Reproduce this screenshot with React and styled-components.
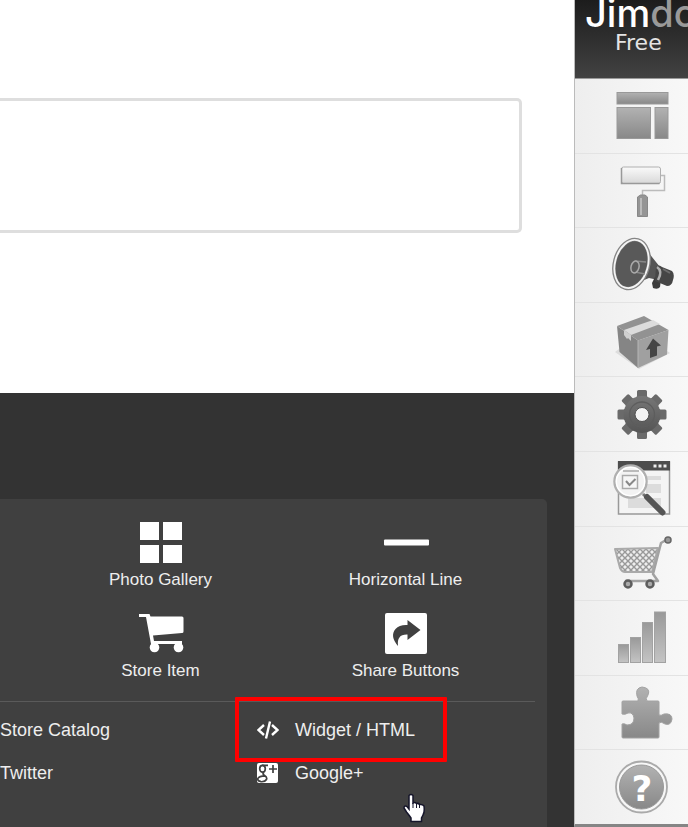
import React from 'react'
import styled, { createGlobalStyle } from 'styled-components'

const GlobalStyle = createGlobalStyle`
    * {
        box-sizing: border-box;
    }
    body {
        margin: 0;
        background: #fff;
        font-family: "Liberation Sans", Arial, sans-serif;
    }
    button {
        font: inherit;
        color: inherit;
        border: 0;
        padding: 0;
        background: none;
        cursor: pointer;
    }
`
const Page = styled.div`
    display: flex;
    min-height: 100vh;
    overflow: hidden;
`
const Main = styled.main`
    flex: 1;
    min-width: 0;
    display: flex;
    flex-direction: column;
`
const Content = styled.section`
    padding: 98px 52px 160px 0;
`
const ContentBox = styled.div`
    height: 135px;
    border: 3px solid #dedede;
    border-left: 0;
    border-radius: 0 5px 5px 0;
`
const Dock = styled.section`
    flex: 1;
    display: flex;
    padding: 106px 27px 0 0;
    background: #333;
`
const Panel = styled.div`
    position: relative;
    flex: 1;
    background: #404040;
    border-radius: 0 5px 0 0;
    color: #eee;
    text-shadow: 0 0 1px #ccc;
`
const Tiles = styled.div`
    display: grid;
    grid-template-columns: 1fr 1fr;
    row-gap: 20px;
    padding: 20px 19px 20px 38px;
`
const Tile = styled.button`
    display: flex;
    flex-direction: column;
    align-items: center;
    gap: 3px;
    font-size: 17px;
    line-height: 20px;
    svg {
        display: block;
        width: 48px;
        height: 48px;
    }
`
const Divider = styled.hr`
    margin: 0 12px 0 0;
    border: 0;
    border-top: 1px solid #5a5a5a;
`
const Links = styled.div`
    display: grid;
    grid-template-columns: 1fr 1fr;
    padding: 6px 33px 0 0;
`
const Cell = styled.div`
    position: relative;
`
const ItemButton = styled.button`
    display: flex;
    align-items: center;
    gap: 16px;
    height: 43px;
    font-size: 18px;
    line-height: 20px;
    svg {
        display: block;
        width: 22px;
        height: 22px;
    }
`
const Highlight = styled.div`
    position: absolute;
    top: -11px;
    left: -22px;
    width: 212px;
    height: 65px;
    border: 4px solid #f00;
    border-radius: 1px;
    pointer-events: none;
`
const Pointer = styled.svg`
    position: absolute;
    left: 402px;
    bottom: 4px;
    width: 24px;
    height: 30px;
`
const Sidebar = styled.aside`
    flex: 0 0 114px;
    display: flex;
    flex-direction: column;
    overflow: hidden;
    border-left: 1px solid #bbb;
    border-bottom: 3px solid #858585;
    background: linear-gradient(90deg, #eee, #f8f8f8);
`
const Brand = styled.header`
    height: 79px;
    overflow: hidden;
    padding-left: 10px;
    border-bottom: 1px solid #999;
    background: linear-gradient(#1c1c1c, #424242);
    font-family: Inter, sans-serif;
    color: #fff;
    white-space: nowrap;
`
const Logo = styled.div`
    height: 32px;
    font-size: 38px;
    font-weight: 500;
    line-height: 26px;
    span {
        color: #999;
    }
`
const Plan = styled.div`
    padding-left: 30px;
    font-family: "DejaVu Sans", sans-serif;
    font-size: 22px;
    line-height: 22px;
    color: #e4e4e4;
`
const Nav = styled.nav`
    flex: 1;
    display: flex;
    flex-direction: column;
`
const NavButton = styled.button`
    flex: 1;
    display: flex;
    align-items: center;
    padding-left: 35px;
    & + & {
        border-top: 1px solid #e3e3e3;
    }
    svg {
        display: block;
        flex: none;
        width: 64px;
        height: 64px;
    }
`

function Defs() {
    return (
        <svg width="0" height="0" style={{ display: 'block', position: 'absolute' }} aria-hidden="true">
            <defs>
                <linearGradient id="gray" x1="0" y1="0" x2="0" y2="1">
                    <stop offset="0" stopColor="#b2b2b2" />
                    <stop offset="1" stopColor="#888" />
                </linearGradient>
                <linearGradient id="light" x1="0" y1="0" x2="0" y2="1">
                    <stop offset="0" stopColor="#fafafa" />
                    <stop offset="1" stopColor="#d8d8d8" />
                </linearGradient>
                <linearGradient id="dark" x1="0" y1="0" x2="0" y2="1">
                    <stop offset="0" stopColor="#777" />
                    <stop offset="1" stopColor="#555" />
                </linearGradient>
                <linearGradient id="bars" x1="0" y1="0" x2="0" y2="1">
                    <stop offset="0" stopColor="#999" />
                    <stop offset="1" stopColor="#c4c4c4" />
                </linearGradient>
                <pattern id="mesh" width="6" height="6" patternUnits="userSpaceOnUse">
                    <rect width="6" height="6" fill="#eee" />
                    <path d="M0 0l6 6M6 0L0 6" stroke="#999" strokeWidth="1.4" />
                </pattern>
            </defs>
        </svg>
    )
}

const LayoutIcon = () => (
    <svg viewBox="0 0 64 64">
        <g fill="url(#gray)" stroke="#999" strokeWidth="1">
            <rect x="7" y="8.5" width="51" height="11.5" />
            <rect x="7" y="23.5" width="33.5" height="31" />
            <rect x="45" y="23.5" width="13" height="31" />
        </g>
    </svg>
)

const RollerIcon = () => (
    <svg viewBox="0 0 64 64">
        <path d="M50 17.500h4.500v15H32.500v6" fill="none" stroke="#bbb" strokeWidth="1.500" />
        <rect x="11.500" y="9" width="39" height="16.500" rx="2" fill="url(#light)" stroke="#b0b0b0" />
        <path d="M11.500 10v15.500h38" fill="none" stroke="#999" strokeWidth="1.500" />
        <path d="M30.500 37h4.500l2.500 2v19.500H27.500V39z" fill="#959595" stroke="#888" />
        <path d="M31 40v17" stroke="#bbb" strokeWidth="2" />
    </svg>
)

const MegaphoneIcon = () => (
    <svg viewBox="0 0 64 64">
        <path d="M30 8l12 16 8 10-2 13-9-2-22 9z" fill="#555" />
        <path d="M45 44l6 2-1 8q-2 3-7 1l-1-5z" fill="#3c3c3c" />
        <path d="M46 34q3-3 6 0l10 4q3 3 1 9-1 6-6 6l-12-5z" fill="#464646" />
        <path d="M47 34q6 4 1 13" fill="none" stroke="#b0b0b0" strokeWidth="2.5" />
        <path d="M53 36l7 4" stroke="#6d6d6d" strokeWidth="2" />
        <ellipse cx="21.500" cy="31" rx="17" ry="25" transform="rotate(15 21.500 31)" fill="#595959" stroke="#858585" strokeWidth="3.500" />
        <ellipse cx="21.500" cy="31" rx="16.500" ry="24.500" transform="rotate(15 21.500 31)" fill="none" stroke="#f4f4f4" strokeWidth="1.800" />
        <path d="M25 28l11 1M25 39l10 2" stroke="#888" strokeWidth="1.500" />
        <ellipse cx="25" cy="34" rx="4" ry="6" transform="rotate(15 25 34)" fill="#5c5c5c" stroke="#aaa" strokeWidth="1.500" />
    </svg>
)

const BoxIcon = () => (
    <svg viewBox="0 0 64 64">
        <path d="M5 44l4-3 20 13 28-11 3 2-31 16z" fill="#ddd" />
        <path d="M7 18L28 32.500V60L9.500 44z" fill="#858585" />
        <path d="M28 32.500L58.500 22 57 46.500 28 60z" fill="#a0a0a0" />
        <path d="M7 18L34 8l24.500 14L28 32.500z" fill="#929292" />
        <path d="M14 22l29-10 7 4-29 11z" fill="#dcdcdc" />
        <path d="M14 22l7 5v6l-3-3-1 1-3-4z" fill="#d0d0d0" />
        <path d="M28 32.500V60" stroke="#b5b5b5" strokeWidth="1" />
        <path d="M43 30.500l8 7-4 1v9l-7 2.500v-9l-4 1z" fill="#454545" />
    </svg>
)

const GearIcon = () => (
    <svg viewBox="0 0 64 64">
        {[0, 45, 90, 135, 180, 225, 270, 315].map((deg) => (
            <path key={deg} d="M25.500 17l1.500-3V9.500q0-1.500 1.500-1.500h7q1.500 0 1.500 1.500V14l1.500 3z" fill="#6a6a6a" transform={`rotate(${deg} 32 32.500)`} />
        ))}
        <circle cx="32" cy="32.500" r="18.500" fill="url(#dark)" />
        <circle cx="32" cy="32.500" r="12.500" fill="none" stroke="#5d5d5d" strokeWidth="1.300" />
        <circle cx="32" cy="32.500" r="7" fill="#f4f4f4" stroke="#505050" strokeWidth="1" />
    </svg>
)

const SearchWindowIcon = () => (
    <svg viewBox="0 0 64 64">
        <rect x="8.500" y="5" width="51" height="52" fill="#f4f4f4" stroke="#999" strokeWidth="1.500" />
        <rect x="8" y="4" width="52" height="9.500" fill="#4d4d4d" />
        <path d="M43.500 7.500h3v3h-3zM48.500 7.500h3v3h-3zM53.500 7.500h3v3h-3z" fill="#eee" />
        <path d="M36 19h15v4H36zM36 27h15v9H36zM18 41h33v10H18z" fill="#dcdcdc" />
        <path d="M33 37L52 55" stroke="#777" strokeWidth="3" />
        <path d="M37 40L52.500 55.500" stroke="#555" strokeWidth="6" strokeLinecap="round" />
        <circle cx="20.500" cy="24.500" r="16" fill="#f3f3f3" stroke="#b0b0b0" strokeWidth="2.500" />
        <circle cx="20.500" cy="24.500" r="14.200" fill="none" stroke="#fff" strokeWidth="1.500" />
        <path d="M13 14h16" stroke="#bbb" strokeWidth="2" />
        <rect x="12.500" y="18.500" width="15" height="13" fill="#f6f6f6" stroke="#aaa" strokeWidth="1.500" />
        <path d="M16 24l3.500 4 6-6" fill="none" stroke="#888" strokeWidth="2" />
    </svg>
)

const CartIcon = () => (
    <svg viewBox="0 0 64 64">
        <path d="M5 18l43-1-6 24H15q-3 0-5-4z" fill="url(#mesh)" stroke="#aaa" strokeWidth="2" strokeLinejoin="round" />
        <path d="M56 9l-5 3-8 31 5 7H15" fill="none" stroke="#a2a2a2" strokeWidth="2.500" strokeLinejoin="round" />
        <circle cx="58" cy="9" r="3" fill="#999" stroke="#666" strokeWidth="1.500" />
        <circle cx="18" cy="53" r="3.500" fill="#aaa" stroke="#5d5d5d" strokeWidth="2.500" />
        <circle cx="40" cy="53" r="3.500" fill="#aaa" stroke="#5d5d5d" strokeWidth="2.500" />
    </svg>
)

const BarsIcon = () => (
    <svg viewBox="0 0 64 64">
        <g fill="url(#bars)" stroke="#a2a2a2">
            <rect x="8.500" y="38.500" width="10" height="18" />
            <rect x="20.500" y="31.500" width="10" height="25" />
            <rect x="32.500" y="16.500" width="10" height="40" />
            <rect x="44.500" y="6" width="11" height="50.500" />
        </g>
    </svg>
)

const PuzzleIcon = () => (
    <svg viewBox="0 0 64 64">
        <path
            d="M13 20h15q1-2-1-5-2-8 5-9 9 1 6 8-3 4-1 6h11q1 0 1 1v13q2 1 5-1 8-1 8 5-1 7-7 5-4-3-6-1v14q0 1-1 1H13q-1 0-1-1V43q2-1 5 1 7 0 7-7-1-6-6-5-3 2-6 1V21q0-1 1-1z"
            fill="url(#gray)"
            stroke="#a2a2a2"
        />
    </svg>
)

const HelpIcon = () => (
    <svg viewBox="0 0 64 64">
        <circle cx="31.500" cy="32" r="25.500" fill="#f7f7f7" stroke="#aaa" strokeWidth="1.800" />
        <circle cx="31.500" cy="32" r="22" fill="url(#gray)" stroke="#999" />
        <text x="32" y="46" textAnchor="middle" fontFamily="DejaVu Sans, sans-serif" fontWeight="700" fontSize="36" fill="#fff">?</text>
    </svg>
)

const GalleryIcon = () => (
    <svg viewBox="0 0 48 48" fill="#fff">
        <path d="M3 3h19v18H3zM26 3h19v18H26zM3 26h19v18H3zM26 26h19v18H26z" />
    </svg>
)

const LineIcon = () => (
    <svg viewBox="0 0 48 48">
        <rect x="2" y="20.500" width="45" height="6" rx="1" fill="#fff" />
    </svg>
)

const StoreIcon = () => (
    <svg viewBox="0 0 48 48" fill="#fff">
        <path d="M2 4h10.500l1 2.500H45q1.500 0 1.500 1.500v13.500q0 1.500-1.500 1.500L16 25.500l1 5.500h28v3H14L9 7H2z" />
        <circle cx="17.500" cy="37.500" r="4.800" />
        <circle cx="41.500" cy="37.500" r="4.800" />
    </svg>
)

const ShareIcon = () => (
    <svg viewBox="0 0 48 48">
        <rect x="3" y="3" width="42" height="41" rx="2" fill="#fff" />
        <path d="M25.500 10L38.500 20l-13 10v-5.500q-11-.5-9.500 11.500-8.500-10-2.500-17 4-4.500 12-4z" fill="#404040" />
    </svg>
)

const CodeIcon = () => (
    <svg viewBox="0 0 22 22" fill="none" stroke="#fff" strokeWidth="2.400">
        <path d="M7 6l-5.500 5L7 16M15 6l5.500 5L15 16M13 2.500L9 19.500" />
    </svg>
)

const GooglePlusIcon = () => (
    <svg viewBox="0 0 22 22">
        <rect x="0" y="1" width="21" height="20" rx="2" fill="#fff" />
        <g fill="none" stroke="#404040" strokeWidth="1.700">
            <ellipse cx="5.500" cy="6.800" rx="2.800" ry="3.400" />
            <path d="M5 3.300h6M7 10.200q-2 1.500 0 2.700 3.500 2 2.500 4.600-1.500 2.500-5.500 2.200-3-.5-3.500-2.700Q2 13.800 8 13.800" />
            <path d="M16 3v8M12 7h8" />
        </g>
    </svg>
)

const navItems = [
    { label: 'Layout', Icon: LayoutIcon },
    { label: 'Style', Icon: RollerIcon },
    { label: 'Promotion', Icon: MegaphoneIcon },
    { label: 'Upgrade', Icon: BoxIcon },
    { label: 'Settings', Icon: GearIcon },
    { label: 'SEO', Icon: SearchWindowIcon },
    { label: 'Store', Icon: CartIcon },
    { label: 'Statistics', Icon: BarsIcon },
    { label: 'Add-ons', Icon: PuzzleIcon },
    { label: 'Help', Icon: HelpIcon },
]

const tiles = [
    { label: 'Photo Gallery', Icon: GalleryIcon },
    { label: 'Horizontal Line', Icon: LineIcon },
    { label: 'Store Item', Icon: StoreIcon },
    { label: 'Share Buttons', Icon: ShareIcon },
]

const links = [
    { label: 'Store Catalog' },
    { label: 'Widget / HTML', Icon: CodeIcon, marked: true },
    { label: 'Twitter' },
    { label: 'Google+', Icon: GooglePlusIcon },
]

function App() {
    return (
        <Page>
            <GlobalStyle />
            <Defs />
            <Main>
                <Content>
                    <ContentBox />
                </Content>
                <Dock>
                    <Panel>
                        <Tiles>
                            {tiles.map(({ label, Icon }) => (
                                <Tile key={label}><Icon />{label}</Tile>
                            ))}
                        </Tiles>
                        <Divider />
                        <Links>
                            {links.map(({ label, Icon, marked }) => (
                                <Cell key={label}>
                                    <ItemButton>{Icon && <Icon />}{label}</ItemButton>
                                    {marked && <Highlight />}
                                </Cell>
                            ))}
                        </Links>
                        <Pointer viewBox="0 0 24 30" aria-hidden="true">
                            <path
                                d="M7 2.500q2-2 4 0V10q2-1 3.500.5 2-.5 3 1 3-.5 4.500 1.500.8 6-1 9L19.500 25v3.500H9V25q-2-3-4.500-6L2 15q0-3 3-1.500l2 2.500z"
                                fill="#fff"
                                stroke="#15152a"
                                strokeWidth="1.500"
                            />
                            <path d="M11 10v5M14.500 11v4M17.500 12v3" stroke="#15152a" />
                        </Pointer>
                    </Panel>
                </Dock>
            </Main>
            <Sidebar>
                <Brand>
                    <Logo>Jim<span>do</span></Logo>
                    <Plan>Free</Plan>
                </Brand>
                <Nav>
                    {navItems.map(({ label, Icon }) => (
                        <NavButton key={label} aria-label={label}><Icon /></NavButton>
                    ))}
                </Nav>
            </Sidebar>
        </Page>
    )
}

export default App
